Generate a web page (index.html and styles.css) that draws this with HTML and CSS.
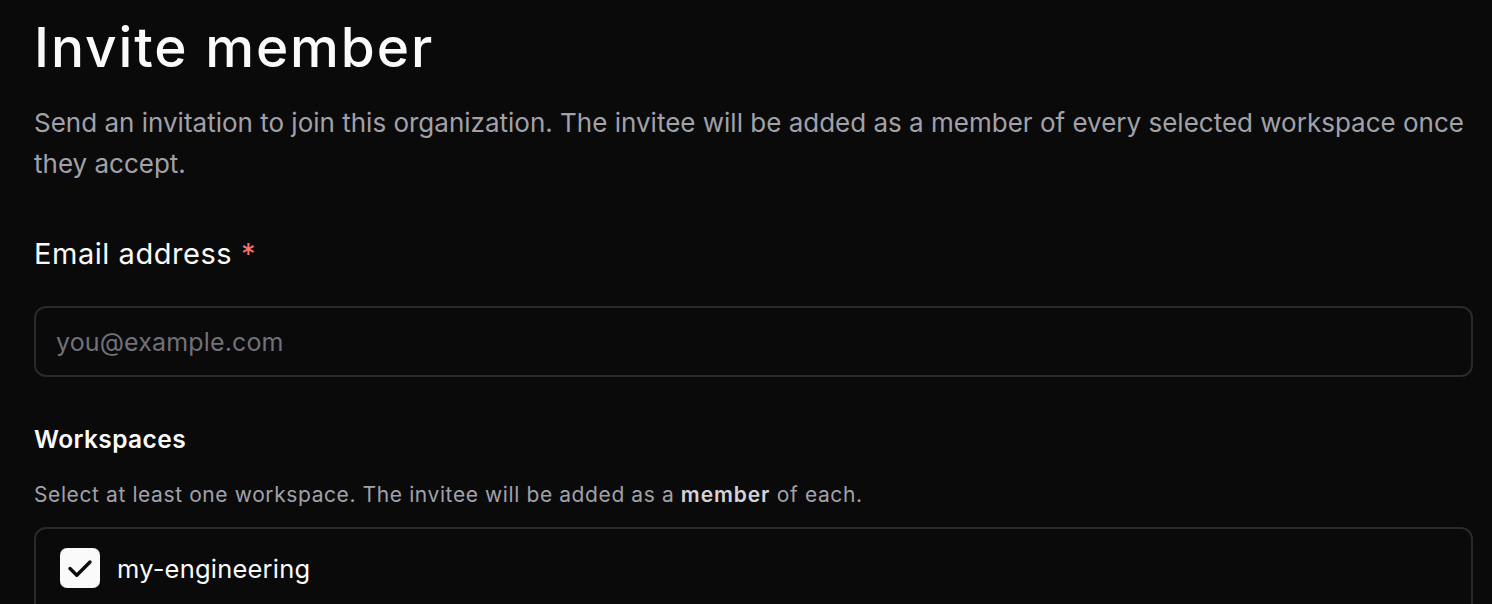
FILE: index.html
```html
<!DOCTYPE html>
<html lang="en">
<head>
<meta charset="utf-8">
<title>Invite member</title>
<link rel="stylesheet" href="styles.css">
</head>
<body>
<main class="page">
  <h1 class="title">Invite member</h1>
  <p class="subtitle">Send an invitation to join this organization. The invitee will be added as a member of every selected workspace once they accept.</p>

  <label class="field-label" for="email">Email address <span class="req">*</span></label>
  <input class="input" id="email" type="email" placeholder="you@example.com">

  <h2 class="section-title">Workspaces</h2>
  <p class="section-desc">Select at least one workspace. The invitee will be added as a <strong>member</strong> of each.</p>

  <div class="list">
    <label class="list-item">
      <span class="checkbox">
        <svg viewBox="0 0 40 40" width="40" height="40" aria-hidden="true"><path d="M10 20.5l6.8 6.8L30 14" fill="none" stroke="#0a0a0a" stroke-width="3.4" stroke-linecap="round" stroke-linejoin="round"/></svg>
      </span>
      <span class="item-name">my-engineering</span>
    </label>
  </div>
</main>
</body>
</html>
```

FILE: styles.css
```css
html, body {
  margin: 0;
  padding: 0;
  background: #0a0a0a;
}
body {
  font-family: Inter, "Noto Sans", sans-serif;
  color: #fafafa;
}
.page {
  padding: 14px 19px 0 34px;
  display: flex;
  flex-direction: column;
}
.title {
  margin: 0;
  font-size: 55px;
  line-height: 66px;
  font-weight: 500;
  letter-spacing: 1.9px;
}
.subtitle {
  margin: 23px 0 0;
  font-size: 26px;
  line-height: 40.5px;
  letter-spacing: 0;
  color: #a1a1aa;
}
.field-label {
  margin-top: 50px;
  font-size: 29px;
  line-height: 40px;
  letter-spacing: 0.55px;
  font-weight: 400;
}
.req {
  color: #f87171;
}
.input {
  margin-top: 32px;
  box-sizing: border-box;
  height: 71px;
  width: 100%;
  border: 2px solid #2a2a2c;
  border-radius: 12px;
  background: #0a0a0a;
  padding: 0 20px;
  font-family: inherit;
  font-size: 25px;
  letter-spacing: 0.15px;
  color: #fafafa;
  outline: none;
}
.input::placeholder {
  color: #71717a;
}
.section-title {
  margin: 44px 0 0;
  font-size: 24.5px;
  line-height: 36px;
  letter-spacing: 0.4px;
  font-weight: 600;
}
.section-desc {
  margin: 23px 0 0;
  font-size: 21px;
  line-height: 30px;
  letter-spacing: 0.6px;
  color: #a1a1aa;
}
.section-desc strong {
  font-weight: 600;
  letter-spacing: 0.9px;
  color: #d4d4d8;
}
.list {
  margin-top: 17px;
  border: 2px solid #2a2a2c;
  border-radius: 12px;
  padding: 18px 24px;
  min-height: 100px;
}
.list-item {
  display: flex;
  align-items: center;
  gap: 17px;
}
.checkbox {
  width: 40px;
  height: 40px;
  border-radius: 7px;
  background: #fafafa;
  display: flex;
  align-items: center;
  justify-content: center;
  flex: none;
}
.item-name {
  font-size: 25.5px;
  line-height: 40px;
  letter-spacing: 0.2px;
  padding-top: 2px;
}
```
